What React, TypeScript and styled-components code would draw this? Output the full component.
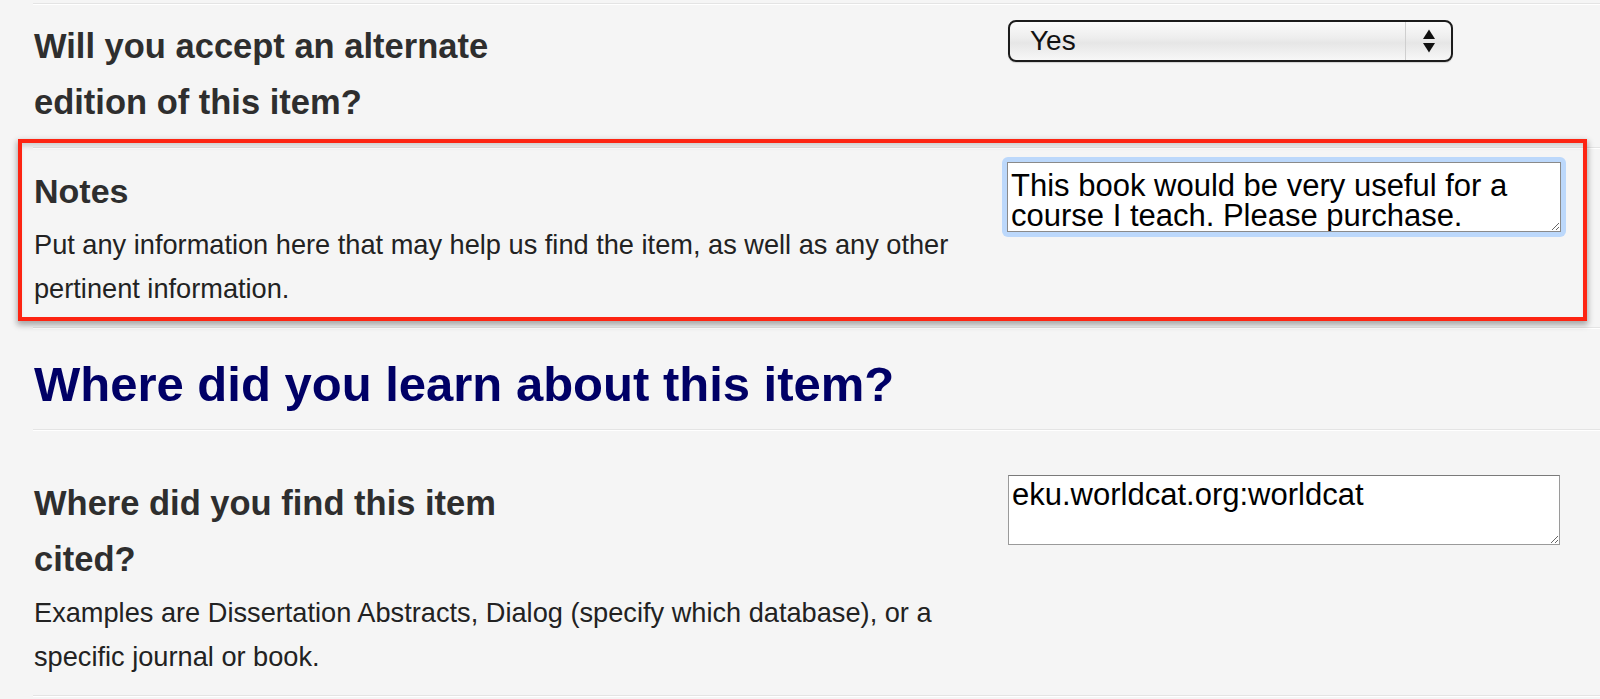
import React from 'react';
import styled, { createGlobalStyle } from 'styled-components';

const GlobalStyle = createGlobalStyle`
  html, body {
    margin: 0;
    padding: 0;
    background: #f5f5f5;
  }
  body {
    font-family: "Liberation Sans", Arial, sans-serif;
    color: #333;
  }
`;

const Page = styled.div`
  width: 1600px;
  height: 699px;
  box-sizing: border-box;
  padding: 3px 0 0 33px;
  overflow: hidden;
`;

const Row = styled.div<{ $top: number; $bottom: number }>`
  position: relative;
  display: grid;
  grid-template-columns: 926px 552px;
  column-gap: 48px;
  align-items: start;
  padding: ${({ $top }) => $top}px 40px ${({ $bottom }) => $bottom}px 1px;
  border-top: 1px solid #e4e4e4;
  box-shadow: inset 0 1px 0 #fff;
`;

const HeadingRow = styled.div`
  padding: 28px 0 17px 1px;
  border-top: 1px solid #e4e4e4;
  box-shadow: inset 0 1px 0 #fff;
`;

const Footer = styled.div`
  border-top: 1px solid #e4e4e4;
  box-shadow: inset 0 1px 0 #fff;
  height: 4px;
`;

const LabelCol = styled.div`
  display: flex;
  flex-direction: column;
`;

const LabelTitle = styled.div<{ $size?: number }>`
  max-width: 520px;
  font-size: ${({ $size }) => $size || 34.5}px;
  line-height: 56px;
  font-weight: bold;
  color: #2e2e2e;
`;

const Help = styled.div`
  margin-top: 4px;
  font-size: 27.2px;
  line-height: 44px;
  color: #222;
`;

const SectionTitle = styled.h2`
  margin: 0;
  font-size: 49px;
  line-height: 56px;
  font-weight: bold;
  color: #000066;
`;

const SelectBox = styled.div`
  display: flex;
  align-items: stretch;
  width: 445px;
  height: 42px;
  box-sizing: border-box;
  margin-top: 2px;
  border: 2px solid #1c1c1c;
  border-radius: 8px;
  background: linear-gradient(to bottom, #fbfbfb 0%, #eeeeee 40%, #e6e6e6 55%, #f7f7f7 100%);
  box-shadow: 0 1px 1px rgba(0, 0, 0, 0.15);
`;

const SelectValue = styled.span`
  flex: 1;
  padding-left: 20px;
  font-size: 28px;
  line-height: 38px;
  color: #111;
`;

const SelectArrows = styled.span`
  width: 45px;
  border-left: 1px solid #cfcfcf;
  display: flex;
  align-items: center;
  justify-content: center;
`;

const FocusRing = styled.div`
  margin: -6px;
  padding: 5px;
  border-radius: 6px;
  background: #bcd8fb;
`;

const Field = styled.textarea<{ $padTop?: number }>`
  display: block;
  width: 552px;
  height: 70px;
  box-sizing: border-box;
  margin: 0;
  padding: ${({ $padTop }) => $padTop ?? 4}px 3px 0;
  border: 1px solid #9a9a9a;
  border-top-color: #7a7a7a;
  background: #fff;
  font-family: "Liberation Sans", Arial, sans-serif;
  font-size: 31px;
  line-height: 30px;
  color: #000;
  resize: both;
  outline: none;
  overflow: hidden;
`;

const FocusedField = styled(Field)`
  width: 100%;
  border-color: #8a8a8a;
`;

const Highlight = styled.div`
  position: absolute;
  top: -9px;
  left: -15px;
  right: 13px;
  bottom: 6px;
  border: 4px solid #fd2412;
  pointer-events: none;
  box-shadow: 0 3px 6px 1px rgba(0, 0, 0, 0.32), inset 0 5px 5px -2px rgba(0, 0, 0, 0.16);
`;

function UpDown() {
  return (
    <svg width="14" height="24" viewBox="0 0 14 24">
      <polygon points="1,10 7,0.5 13,10" fill="#111" />
      <polygon points="1,14 13,14 7,23.5" fill="#111" />
    </svg>
  );
}

export default function App() {
  return (
    <>
      <GlobalStyle />
      <Page>
        <Row $top={14} $bottom={17}>
          <LabelCol>
            <LabelTitle>Will you accept an alternate edition of this item?</LabelTitle>
          </LabelCol>
          <SelectBox>
            <SelectValue>Yes</SelectValue>
            <SelectArrows>
              <UpDown />
            </SelectArrows>
          </SelectBox>
        </Row>

        <Row $top={15} $bottom={16}>
          <LabelCol>
            <LabelTitle $size={34}>Notes</LabelTitle>
            <Help>
              Put any information here that may help us find the item, as well as any other pertinent information.
            </Help>
          </LabelCol>
          <FocusRing>
            <FocusedField $padTop={8} defaultValue="This book would be very useful for a course I teach. Please purchase." />
          </FocusRing>
          <Highlight />
        </Row>

        <HeadingRow>
          <SectionTitle>Where did you learn about this item?</SectionTitle>
        </HeadingRow>

        <Row $top={45} $bottom={16}>
          <LabelCol>
            <LabelTitle>Where did you find this item cited?</LabelTitle>
            <Help>Examples are Dissertation Abstracts, Dialog (specify which database), or a specific journal or book.</Help>
          </LabelCol>
          <Field defaultValue="eku.worldcat.org:worldcat" />
        </Row>
        <Footer />
      </Page>
    </>
  );
}
